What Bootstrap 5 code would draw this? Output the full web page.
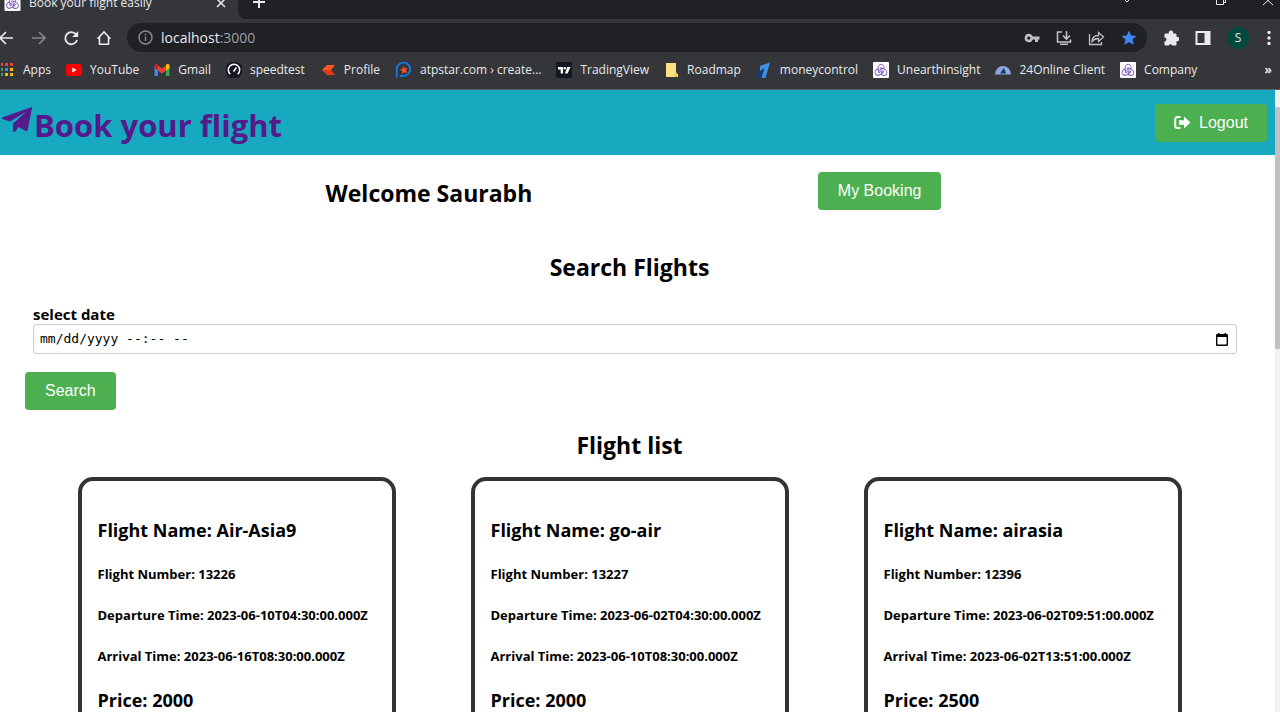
<!DOCTYPE html>
<html lang="en">
<head>
<meta charset="utf-8">
<meta name="viewport" content="width=device-width, initial-scale=1">
<title>Book your flight easily</title>
<link rel="stylesheet" href="https://cdn.jsdelivr.net/npm/bootstrap@5.3.0/dist/css/bootstrap.min.css">
<style>
  body { font-family: "Open Sans", "Noto Sans", sans-serif; color: #000; }
  svg { display: block; flex: none; }
  .chrome-ui { background: #35363a; color: #e8eaed; border-bottom: 1px solid #5b6467; }
  .chrome-ui button, .chrome-ui a { background: none; border: 0; padding: 0; color: inherit; text-decoration: none; flex: none; }
  .tab-strip { height: 19px; background: #202124; font-size: 12px; }
  .tab-active { height: 34px; width: 238px; background: #35363a; padding: 2px 12px 0 4px; }
  .tab-rest { height: 34px; background: #202124; border-bottom-left-radius: 8px; padding: 0 6px 0 14px; }
  .tab-fill { background: #35363a; }
  .window-set { gap: 35px; }
  .tab-find { margin-right: 47px; }
  .tool-row { height: 37px; padding-right: 9px; }
  .address { height: 29px; border-radius: 15px; background: #202124; padding: 0 10px 0 11px; }
  .url-text { font-size: 14px; }
  .url-port { color: #9aa0a6; }
  .muted-icon, .chrome-ui button.muted-icon { color: #85878a; }
  .soft-icon { color: #bdc1c6; }
  .chrome-ui .avatar { width: 22px; height: 22px; border-radius: 50%; background: #00493f; font-size: 12px; line-height: 22px; }
  .bookmarks { height: 33px; padding: 0 8px 6px 1px; gap: 15px; font-size: 12px; white-space: nowrap; }
  .bookmarks a { display: flex; align-items: center; gap: 8px; }
  .page-scroll { width: 5px; background: #f1f1f1; padding-top: 17px; }
  .page-thumb { height: 40%; background: #c1c1c1; }
  .site-bar { background: #17a9c0; height: 65px; padding: 0 8px 0 2px; }
  .brand { color: #551a8b; font-size: 31px; font-weight: 700; line-height: 44px; gap: 1px; }
  .btn-go { background: #4caf50; color: #fff; border: 0; border-radius: 4px; height: 38px; padding: 0 20px; font: 16px "Liberation Sans", Arial, sans-serif; }
  .btn-go:hover { background: #449d48; color: #fff; }
  .btn-exit { padding: 0 19px; }
  .main-area { padding-right: 16px; }
  .welcome { padding: 17px 32px 0 40px; }
  .title-text { font-size: 23px; font-weight: 700; line-height: 34px; margin: 0; }
  .search-form { padding: 20px 22px 18px 25px; }
  .date-label { font-size: 15px; font-weight: 700; line-height: 20px; }
  .date-box { height: 30px; border: 1px solid #ccc; border-radius: 3px; padding: 0 8px 0 6px; margin-bottom: 18px; background: #fff; }
  .date-box input { border: 0; outline: 0; padding: 0; min-width: 0; font-family: "DejaVu Sans Mono", monospace; font-size: 13px; color: #000; background: none; }
  .date-box input::placeholder { color: #000; opacity: 1; }
  .date-box button { border: 0; padding: 0; background: none; }
  .flights { padding: 15px 40px 0; }
  .flight { width: 318px; gap: 23px; border: 4px solid #333; border-radius: 15px; padding: 37px 16px; white-space: nowrap; }
  .flight h3 { font-size: 18px; font-weight: 700; line-height: 24px; margin: 0; }
  .flight h5 { font-size: 13px; font-weight: 700; line-height: 18px; margin: 0; }
</style>
</head>
<body class="vh-100 d-flex flex-column overflow-hidden">

<svg class="d-none" aria-hidden="true">
  <symbol id="redux" viewBox="0 0 16 16">
    <rect width="16" height="16" rx="1" fill="#fff"/>
    <g fill="none" stroke="#764abc" stroke-width=".9">
      <path id="loop" d="M5.600 9.400C4.400 6.600 5 2.400 8 2.300c2.700 0 3.800 2.700 2.700 5M8 5.800a1 1 0 1 0 .1 0"/>
      <path d="M5.600 9.400C4.400 6.600 5 2.400 8 2.300c2.700 0 3.800 2.700 2.700 5M8 5.800a1 1 0 1 0 .1 0" transform="rotate(120 8 8.700)"/>
      <path d="M5.600 9.400C4.400 6.600 5 2.400 8 2.300c2.700 0 3.800 2.700 2.700 5M8 5.800a1 1 0 1 0 .1 0" transform="rotate(240 8 8.700)"/>
    </g>
  </symbol>
</svg>

<header class="chrome-ui flex-shrink-0">
  <div class="tab-strip d-flex align-items-end overflow-hidden">
    <div class="tab-active d-flex align-items-center">
      <svg width="17" height="16"><use href="#redux"/></svg>
      <span class="ms-2 flex-grow-1">Book your flight easily</span>
      <button type="button" aria-label="Close tab"><svg width="10" height="10" viewBox="0 0 10 10" stroke="currentColor" stroke-width="1.500"><path d="M1 1l8 8M9 1L1 9"/></svg></button>
    </div>
    <div class="tab-fill flex-grow-1">
      <div class="tab-rest d-flex align-items-center">
        <button type="button" aria-label="New tab"><svg width="14" height="14" viewBox="0 0 14 14" stroke="currentColor" stroke-width="2"><path d="M7 1v12M1 7h12"/></svg></button>
        <div class="window-set ms-auto d-flex align-items-center">
          <button type="button" class="tab-find" aria-label="Search tabs"><svg width="12" height="10" viewBox="0 0 12 10" fill="none" stroke="currentColor"><path d="M3 2l3 3 3-3"/></svg></button>
          <button type="button" aria-label="Restore"><svg width="12" height="12" viewBox="0 0 12 12" fill="none" stroke="currentColor"><path d="M1.500 .500h7v8h-7zM3 .500h7.500V6.500h-2"/></svg></button>
          <button type="button" aria-label="Close"><svg width="12" height="12" viewBox="0 0 12 12" stroke="currentColor"><path d="M1 0l10 9M11 0L1 9"/></svg></button>
        </div>
      </div>
    </div>
  </div>

  <div class="tool-row d-flex align-items-center">
    <nav class="d-flex align-items-center gap-3" aria-label="Browser">
      <button type="button" aria-label="Back"><svg width="14" height="16" viewBox="0 0 14 16" fill="none" stroke="currentColor" stroke-width="1.700"><path d="M13 8H0M6 2L0 8l6 6"/></svg></button>
      <button type="button" class="muted-icon" aria-label="Forward"><svg width="16" height="16" viewBox="0 0 16 16" fill="none" stroke="currentColor" stroke-width="1.700"><path d="M2 8h12.500M9 2l6 6-6 6"/></svg></button>
      <button type="button" aria-label="Reload"><svg width="17" height="16" viewBox="0 0 17 16" fill="none" stroke="currentColor" stroke-width="1.800"><path d="M14 4.500A6 6 0 1 0 15 10"/><path d="M16.200 1v6H10.200z" fill="currentColor" stroke="none"/></svg></button>
      <button type="button" aria-label="Home"><svg width="16" height="16" viewBox="0 0 16 16" fill="none" stroke="currentColor" stroke-width="1.600"><path d="M2.500 8.800L9 2l6.500 6.800M4.500 7v7.200h9V7"/></svg></button>
    </nav>
    <div class="address d-flex align-items-center flex-grow-1 ms-3">
      <svg class="muted-icon" width="15" height="15" viewBox="0 0 15 15" fill="none" stroke="currentColor" stroke-width="1.500"><circle cx="7.500" cy="7.500" r="6.500"/><path d="M7.500 6.500v4.500M7.500 3.800v1.500"/></svg>
      <span class="url-text flex-grow-1 ms-2">localhost<span class="url-port">:3000</span></span>
      <div class="soft-icon d-flex align-items-center gap-3">
        <button type="button" aria-label="Passwords"><svg width="16" height="16" viewBox="0 0 16 16"><path fill="currentColor" fill-rule="evenodd" d="M4.800 3.800a4.200 4.200 0 0 1 4 2.700H15.500v3h-1.500V12h-3V9.500H8.800a4.200 4.200 0 1 1-4-5.700zm0 2.600a1.700 1.700 0 1 0 0 3.400 1.700 1.700 0 0 0 0-3.400z"/></svg></button>
        <button type="button" aria-label="Install"><svg width="16" height="16" viewBox="0 0 16 16" fill="none" stroke="currentColor" stroke-width="1.600"><path d="M6 2H1.500v10h13V9.500M4 14.300h8M10.500 1v7.500M7 5.500L10.500 9 14 5.500"/></svg></button>
        <button type="button" aria-label="Share"><svg width="17" height="16" viewBox="0 0 17 16" fill="none" stroke="currentColor" stroke-width="1.300"><path d="M1.500 4v10.500h12V12M4 11.500C4 7.500 6.500 5.500 10.500 5.500V2.500L15.500 7l-5 4.500V8.500C7.500 8.500 5.500 9.500 4 11.500z"/></svg></button>
        <button type="button" aria-label="Bookmark"><svg width="16" height="16" viewBox="0 0 16 16" fill="#4285f4"><path d="M8 .5l2.200 5 5.400.5-4.100 3.600 1.200 5.300L8 12.100l-4.700 2.800 1.200-5.300L.4 6l5.400-.5z"/></svg></button>
      </div>
    </div>
    <div class="d-flex align-items-center gap-3 ms-3">
      <button type="button" aria-label="Extensions"><svg width="16" height="16" viewBox="0 0 16 16" fill="currentColor"><path d="M4 3.500h2a2.200 2.200 0 1 1 4 0h2.500a1 1 0 0 1 1 1V7a2.200 2.200 0 1 1 0 4v3.500a1 1 0 0 1-1 1H9.300a2 2 0 0 0-3.600 0H2.500a1 1 0 0 1-1-1v-3a2 2 0 0 0 0-4v-3a1 1 0 0 1 1-1z"/></svg></button>
      <button type="button" aria-label="Side panel"><svg width="16" height="16" viewBox="0 0 16 16"><path fill="currentColor" fill-rule="evenodd" d="M.5 1h15v14H.5zM2.500 3v10H9.500V3z"/></svg></button>
      <button type="button" class="avatar text-center" aria-label="Profile S">S</button>
      <button type="button" aria-label="Menu"><svg width="6" height="16" viewBox="0 0 6 16" fill="currentColor"><circle cx="4" cy="2.500" r="1.700"/><circle cx="4" cy="8" r="1.700"/><circle cx="4" cy="13.500" r="1.700"/></svg></button>
    </div>
  </div>

  <nav class="bookmarks d-flex align-items-center" aria-label="Bookmarks">
    <a href="#"><svg width="14" height="14" viewBox="1 0 14 14"><path fill="#ea4335" d="M0 0h3v3H0zM5 0h3v3H5zM10 0h3v3h-3z"/><path fill="#34a853" d="M0 5h3v3H0zM0 10h3v3H0z"/><path fill="#4285f4" d="M5 5h3v3H5z"/><path fill="#fbbc05" d="M10 5h3v3h-3zM5 10h3v3H5zM10 10h3v3h-3z"/></svg>Apps</a>
    <a href="#"><svg width="16" height="16" viewBox="0 0 16 16"><rect y="2" width="16" height="12" rx="3" fill="#f00"/><path d="M6.300 5.500v5L10.600 8z" fill="#fff"/></svg>YouTube</a>
    <a href="#"><svg width="16" height="16" viewBox="0 0 16 16"><path fill="#4285f4" d="M.5 4v10H4V6.500z"/><path fill="#34a853" d="M12 6.500V14h3.500V4z"/><path fill="#ea4335" d="M4 3.500l4 3 4-3v5l-4 3-4-3z"/><path fill="#c5221f" d="M.5 4c0-2 2-2.500 3.500-1.300V8.500L.5 6z"/><path fill="#fbbc04" d="M15.500 4c0-2-2-2.500-3.500-1.300V8.500L15.500 6z"/></svg>Gmail</a>
    <a href="#"><svg width="16" height="16" viewBox="0 0 16 16" fill="none"><rect width="16" height="16" rx="6" fill="#141526"/><path d="M4.300 12.200a5.700 5.700 0 1 1 7.400 0M7.500 9.500L10.500 5.500" stroke="#fff" stroke-width="1.500"/></svg>speedtest</a>
    <a href="#"><svg width="16" height="16" viewBox="0 0 16 16"><path fill="#ff5722" d="M7 3h8l-4 5H2z"/><path fill="#e53a1c" d="M2 8h9l4 5H7z"/></svg>Profile</a>
    <a href="#"><svg width="17" height="16" viewBox="0 0 17 16"><path fill="none" stroke="#1673e6" stroke-width="2" d="M1.800 15.500V8A6.700 6.700 0 1 1 8.500 14H5"/><path fill="#f4511e" d="M8.500 3.800l1.200 2.500 2.800-.3-1.500 2.200 1.200 2.600-2.900-.6-2.300 1.600.1-2.800L5 7.400l2.700-.8z"/></svg>atpstar.com › create...</a>
    <a href="#"><svg width="16" height="16" viewBox="0 0 16 16"><rect width="16" height="16" rx="2" fill="#131722"/><path fill="#fff" d="M2 5h5v6.500H4.700V7.500H2zM11 5h3.500l-3 6.500H8.800L10.600 7z"/><circle cx="8.800" cy="6.200" r="1.200" fill="#fff"/></svg>TradingView</a>
    <a href="#"><svg width="15" height="16" viewBox="0 0 15 16"><path fill="#ffe082" d="M2 1h10v9.500l2 2V15H2z"/><path fill="#f7c94b" d="M12 10.500l1.500 1.500v3h-3V12z"/></svg>Roadmap</a>
    <a href="#"><svg width="16" height="16" viewBox="0 0 16 16"><path fill="#123a7c" d="M1 10l6-2-1 8H1z"/><path fill="#3d8fe8" d="M4 4L14 0.500 9.500 16H5.500L8.500 6 4 9z"/></svg>moneycontrol</a>
    <a href="#"><svg width="16" height="16"><use href="#redux"/></svg>Unearthinsight</a>
    <a href="#"><svg width="16" height="16" viewBox="0 0 16 16"><path fill="#8fa8dc" d="M0 12.500a8 8.500 0 0 1 16 0z"/><path fill="#1d3263" d="M5 11.500L9 6l2 5.500z"/></svg>24Online Client</a>
    <a href="#"><svg width="16" height="16"><use href="#redux"/></svg>Company</a>
    <button type="button" class="ms-auto fw-bold" aria-label="More bookmarks">»</button>
  </nav>
</header>

<div class="d-flex flex-grow-1 overflow-hidden">
  <div class="flex-grow-1 overflow-hidden">
    <div class="site-bar d-flex align-items-center justify-content-between">
      <a class="brand d-flex text-decoration-none pt-1" href="#">
        <svg class="mt-1" width="31" height="26" viewBox="0 0 31 26" fill="currentColor"><path d="M30 0L0 10.500c-.5.500-.3 1.200.2 1.400L8 14.500 24.500 4.500 11 16.500v7c0 1.500 1.500 2 2.300 1l3.400-4.500 7 4c.9.400 1.700 0 1.900-.9L30 1.200z"/></svg>
        <span>Book your flight</span>
      </a>
      <button type="button" class="btn-go btn-exit d-flex align-items-center gap-2">
        <svg width="17" height="13" viewBox="0 0 17 13"><path d="M6.500 1H3.500A2.300 2.300 0 0 0 1.200 3.300v6.400A2.300 2.300 0 0 0 3.500 12h3" fill="none" stroke="#fff" stroke-width="2"/><path d="M5 4.300h5V.500l6.500 6-6.500 6V8.700H5z" fill="#fff"/></svg>Logout
      </button>
    </div>

    <main class="main-area">
      <div class="welcome d-flex justify-content-evenly align-items-end">
        <h2 class="title-text">Welcome Saurabh</h2>
        <button type="button" class="btn-go">My Booking</button>
      </div>

      <h2 class="title-text text-center mt-4 pt-3">Search Flights</h2>
      <form class="search-form">
        <div class="ps-2 d-flex flex-column">
          <label class="date-label" for="when">select date</label>
          <div class="date-box d-flex align-items-center">
            <input class="flex-grow-1" type="text" id="when" placeholder="mm/dd/yyyy --:-- --">
            <button type="button" aria-label="Open calendar"><svg width="12" height="13" viewBox="0 0 12 13"><path fill-rule="evenodd" d="M2 0h1.500v1h5V0H10v1h1.200l.8.800v10.400l-.8.800H.8l-.8-.8V1.800L.8 1H2zM1.400 4v7.600h9.200V4z"/></svg></button>
          </div>
        </div>
        <button type="button" class="btn-go">Search</button>
      </form>

      <h2 class="title-text text-center">Flight list</h2>
      <div class="flights row g-0">
        <div class="col-4 d-flex justify-content-center"><article class="flight d-flex flex-column">
          <h3>Flight Name: Air-Asia9</h3><h5>Flight Number: 13226</h5><h5>Departure Time: 2023-06-10T04:30:00.000Z</h5><h5>Arrival Time: 2023-06-16T08:30:00.000Z</h5><h3>Price: 2000</h3>
        </article></div>
        <div class="col-4 d-flex justify-content-center"><article class="flight d-flex flex-column">
          <h3>Flight Name: go-air</h3><h5>Flight Number: 13227</h5><h5>Departure Time: 2023-06-02T04:30:00.000Z</h5><h5>Arrival Time: 2023-06-10T08:30:00.000Z</h5><h3>Price: 2000</h3>
        </article></div>
        <div class="col-4 d-flex justify-content-center"><article class="flight d-flex flex-column">
          <h3>Flight Name: airasia</h3><h5>Flight Number: 12396</h5><h5>Departure Time: 2023-06-02T09:51:00.000Z</h5><h5>Arrival Time: 2023-06-02T13:51:00.000Z</h5><h3>Price: 2500</h3>
        </article></div>
      </div>
    </main>
  </div>
  <div class="page-scroll flex-shrink-0"><div class="page-thumb"></div></div>
</div>

<script src="https://cdn.jsdelivr.net/npm/bootstrap@5.3.0/dist/js/bootstrap.bundle.min.js"></script>
</body>
</html>
